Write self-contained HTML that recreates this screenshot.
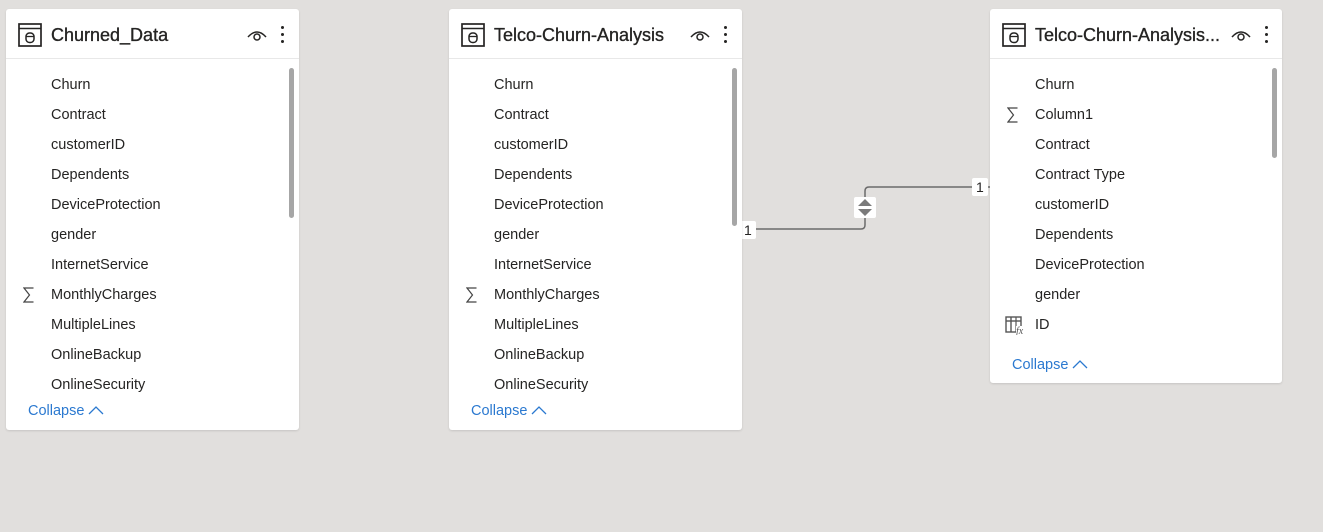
<!DOCTYPE html>
<html><head><meta charset="utf-8"><style>
*{margin:0;padding:0;box-sizing:border-box}
body{width:1323px;height:532px;background:#e1dfdd;font-family:"Liberation Sans",sans-serif;position:relative;overflow:hidden}
.card{position:absolute;top:9px;width:293px;background:#fff;border-radius:3px;box-shadow:0 1px 2px rgba(0,0,0,.12)}
.hd{height:50px;border-bottom:1px solid #e8e8e8;position:relative}
.hd .t{position:absolute;left:45px;top:16px;font-size:18px;font-weight:normal;color:#252423;white-space:nowrap;-webkit-text-stroke:0.35px #252423}
.ti{position:absolute;left:12px;top:14px}
.eye{position:absolute;left:241px;top:19px}
.dots{position:absolute;left:275px;top:17px;width:3px}
.dots i{display:block;width:3px;height:3px;background:#252423;border-radius:50%;margin-bottom:4px}
.list{position:absolute;top:61px;left:0;right:0;overflow:hidden}
.row{height:30px;line-height:30px;font-size:14.5px;color:#252423;padding-left:45px;position:relative}
.sig{position:absolute;left:17px;top:7px}
.sb{position:absolute;right:5px;width:5px;background:#a6a6a6;border-radius:3px;top:59px}
.col{position:absolute;left:22px;font-size:14.5px;color:#2b79d0}
.lbl{position:absolute;background:#fff;font-size:14px;color:#252423;padding:0 4px;height:18px;line-height:18px;border-radius:2px}
</style></head><body>

<svg style="position:absolute;left:0;top:0" width="1323" height="532">
<path d="M741 229 H861 Q865 229 865 225 V191 Q865 187 869 187 H990" fill="none" stroke="#6b6b6b" stroke-width="1.5"/>
<rect x="854" y="197" width="22" height="21" rx="2" fill="#fff"/>
<path d="M858 206 L865 199 L872 206Z M858 209 L872 209 L865 216Z" fill="#7a7a7a"/>
</svg>
<div class="lbl" style="left:740px;top:221px">1</div>
<div class="lbl" style="left:972px;top:178px">1</div>

<!-- card 1 -->
<div class="card" style="left:6px;height:421px">
 <div class="hd">
  <svg class="ti" width="24" height="24" viewBox="0 0 24 24"><rect x="1" y="1" width="22" height="22" fill="none" stroke="#252423" stroke-width="1.7"/><line x1="1" y1="5.5" x2="23" y2="5.5" stroke="#252423" stroke-width="1.6"/><rect x="8" y="10" width="8" height="9.5" rx="3.5" fill="none" stroke="#252423" stroke-width="1.5"/><line x1="8" y1="13.5" x2="16" y2="13.5" stroke="#252423" stroke-width="1.3"/></svg>
  <div class="t">Churned_Data</div>
  <svg class="eye" width="20" height="14" viewBox="0 0 20 14"><path d="M1 9 Q10 -1 19 9" fill="none" stroke="#252423" stroke-width="1.5"/><circle cx="10" cy="9" r="3" fill="none" stroke="#252423" stroke-width="1.5"/></svg>
  <div class="dots"><i></i><i></i><i></i></div>
 </div>
 <div class="list" style="height:331px">
  <div class="row">Churn</div><div class="row">Contract</div><div class="row">customerID</div><div class="row">Dependents</div><div class="row">DeviceProtection</div><div class="row">gender</div><div class="row">InternetService</div><div class="row"><svg class="sig" width="11" height="16" viewBox="0 0 11 16"><path d="M10.5 1 H1 L6.5 8 L1 15 H10.5" fill="none" stroke="#444" stroke-width="1.2"/></svg>MonthlyCharges</div><div class="row">MultipleLines</div><div class="row">OnlineBackup</div><div class="row">OnlineSecurity</div>
 </div>
 <div class="sb" style="height:150px"></div>
 <div class="col" style="top:394px">Collapse <svg width="16" height="10" viewBox="0 0 16 10"><path d="M1 9 L8 2 L15 9" fill="none" stroke="#2b79d0" stroke-width="1.3"/></svg></div>
</div>

<!-- card 2 -->
<div class="card" style="left:449px;height:421px">
 <div class="hd">
  <svg class="ti" width="24" height="24" viewBox="0 0 24 24"><rect x="1" y="1" width="22" height="22" fill="none" stroke="#252423" stroke-width="1.7"/><line x1="1" y1="5.5" x2="23" y2="5.5" stroke="#252423" stroke-width="1.6"/><rect x="8" y="10" width="8" height="9.5" rx="3.5" fill="none" stroke="#252423" stroke-width="1.5"/><line x1="8" y1="13.5" x2="16" y2="13.5" stroke="#252423" stroke-width="1.3"/></svg>
  <div class="t">Telco-Churn-Analysis</div>
  <svg class="eye" width="20" height="14" viewBox="0 0 20 14"><path d="M1 9 Q10 -1 19 9" fill="none" stroke="#252423" stroke-width="1.5"/><circle cx="10" cy="9" r="3" fill="none" stroke="#252423" stroke-width="1.5"/></svg>
  <div class="dots"><i></i><i></i><i></i></div>
 </div>
 <div class="list" style="height:331px">
  <div class="row">Churn</div><div class="row">Contract</div><div class="row">customerID</div><div class="row">Dependents</div><div class="row">DeviceProtection</div><div class="row">gender</div><div class="row">InternetService</div><div class="row"><svg class="sig" width="11" height="16" viewBox="0 0 11 16"><path d="M10.5 1 H1 L6.5 8 L1 15 H10.5" fill="none" stroke="#444" stroke-width="1.2"/></svg>MonthlyCharges</div><div class="row">MultipleLines</div><div class="row">OnlineBackup</div><div class="row">OnlineSecurity</div>
 </div>
 <div class="sb" style="height:158px"></div>
 <div class="col" style="top:394px">Collapse <svg width="16" height="10" viewBox="0 0 16 10"><path d="M1 9 L8 2 L15 9" fill="none" stroke="#2b79d0" stroke-width="1.3"/></svg></div>
</div>

<!-- card 3 -->
<div class="card" style="left:990px;width:292px;height:374px">
 <div class="hd">
  <svg class="ti" width="24" height="24" viewBox="0 0 24 24"><rect x="1" y="1" width="22" height="22" fill="none" stroke="#252423" stroke-width="1.7"/><line x1="1" y1="5.5" x2="23" y2="5.5" stroke="#252423" stroke-width="1.6"/><rect x="8" y="10" width="8" height="9.5" rx="3.5" fill="none" stroke="#252423" stroke-width="1.5"/><line x1="8" y1="13.5" x2="16" y2="13.5" stroke="#252423" stroke-width="1.3"/></svg>
  <div class="t">Telco-Churn-Analysis...</div>
  <svg class="eye" width="20" height="14" viewBox="0 0 20 14"><path d="M1 9 Q10 -1 19 9" fill="none" stroke="#252423" stroke-width="1.5"/><circle cx="10" cy="9" r="3" fill="none" stroke="#252423" stroke-width="1.5"/></svg>
  <div class="dots"><i></i><i></i><i></i></div>
 </div>
 <div class="list" style="height:280px">
  <div class="row">Churn</div><div class="row"><svg class="sig" width="11" height="16" viewBox="0 0 11 16"><path d="M10.5 1 H1 L6.5 8 L1 15 H10.5" fill="none" stroke="#444" stroke-width="1.2"/></svg>Column1</div><div class="row">Contract</div><div class="row">Contract Type</div><div class="row">customerID</div><div class="row">Dependents</div><div class="row">DeviceProtection</div><div class="row">gender</div>
  <div class="row"><svg style="position:absolute;left:15px;top:6px" width="22" height="19" viewBox="0 0 22 19"><rect x="1" y="1" width="15" height="15" fill="none" stroke="#555" stroke-width="1.4"/><line x1="1" y1="5" x2="16" y2="5" stroke="#555" stroke-width="1.4"/><line x1="6" y1="1" x2="6" y2="16" stroke="#555" stroke-width="1.4"/><line x1="11" y1="1" x2="11" y2="16" stroke="#555" stroke-width="1.2"/><rect x="11" y="10" width="11" height="9" fill="#fff"/><text x="11" y="18" font-size="10" font-style="italic" fill="#555" font-family="Liberation Serif">fx</text></svg>ID</div>
 </div>
 <div class="sb" style="height:90px"></div>
 <div class="col" style="top:348px">Collapse <svg width="16" height="10" viewBox="0 0 16 10"><path d="M1 9 L8 2 L15 9" fill="none" stroke="#2b79d0" stroke-width="1.3"/></svg></div>
</div>

</body></html>
